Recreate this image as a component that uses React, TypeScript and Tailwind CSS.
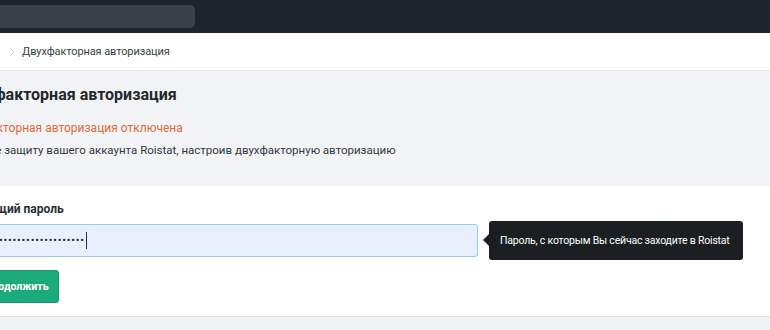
import { ChevronRight } from 'lucide-react';

export default function App() {
  return (
    <div className="w-[770px] h-[330px] overflow-hidden bg-[#f1f2f4] font-['Roboto',sans-serif] text-[12px] text-[#2f3337]">
      {/* верхняя панель */}
      <div className="h-[33px] bg-[#1f232d] pt-[5px]">
        <div className="ml-[-20px] h-[23px] w-[215px] rounded-[5px] bg-[#3b404b]" />
      </div>

      {/* хлебные крошки */}
      <div className="h-[38px] bg-white border-b border-[#e4e6e9] flex items-center">
        <span className="ml-[-60px] w-[60px] text-[#9bb8a8] whitespace-nowrap">Профиль</span>
        <ChevronRight className="ml-[5px] h-[14px] w-[14px] text-[#b9bcc1]" strokeWidth={1.5} />
        <span className="ml-[3px] text-[11px] tracking-[-0.1px] text-[#3a3e43] leading-5">Двухфакторная авторизация</span>
      </div>

      {/* статус */}
      <div className="ml-[-46px] pt-[12px] pb-[26px] bg-[#f2f3f5]">
        <h1 className="ml-[3px] text-[16px] font-bold leading-6 text-[#23272c] whitespace-nowrap">Двухфакторная авторизация</h1>
        <div className="mt-[11px] leading-5 text-[#e2693f] whitespace-nowrap">Двухфакторная авторизация отключена</div>
        <div className="ml-[-6px] mt-[2px] text-[11.5px] leading-5 text-[#34383d] whitespace-nowrap">
          Повысьте защиту вашего аккаунта Roistat, настроив двухфакторную авторизацию
        </div>
      </div>

      {/* форма */}
      <div className="bg-white border-b border-[#e1e3e6] pt-[13px] pb-[13px]">
        <div className="ml-[-34px]">
          <label className="ml-[4px] block font-bold leading-5 text-[#2a2e33] whitespace-nowrap">Текущий пароль</label>
          <div className="relative mt-[5px] w-[512px]">
            <div className="h-[33px] rounded-[3px] border border-[#93cde9] bg-[#e8f0fe] flex items-center pl-[14px]">
              <span className="text-[11px] tracking-[0.8px] text-[#202428] leading-none">•••••••••••••••••••••••</span>
              <span className="ml-[1px] h-[17px] w-px bg-[#2b2f33]" />
            </div>
            <div className="absolute left-[523px] top-[-3px] h-[39px] w-[254px] rounded-[3px] bg-[#1b1f22] flex items-center px-[11px]">
              <span className="absolute left-[-6px] top-[13px] h-0 w-0 border-y-[6px] border-r-[6px] border-y-transparent border-r-[#1b1f22]" />
              <span className="text-[10.5px] tracking-[-0.2px] text-white whitespace-nowrap">Пароль, с которым Вы сейчас заходите в Roistat</span>
            </div>
          </div>
          <button className="ml-[9px] mt-[13px] h-[33px] px-[9px] rounded-[3px] border border-[#17996e] bg-[#1bab7b] text-[10.5px] text-white font-bold whitespace-nowrap">
            Продолжить
          </button>
        </div>
      </div>
    </div>
  );
}
